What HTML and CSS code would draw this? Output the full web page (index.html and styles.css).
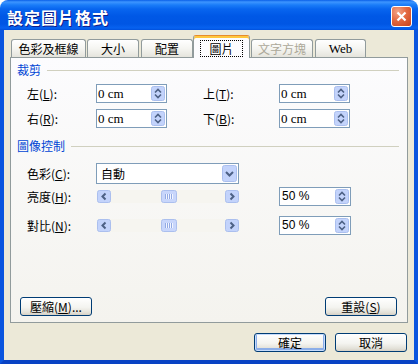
FILE: index.html
```html
<!DOCTYPE html>
<html lang="zh-Hant">
<head>
    <meta charset="UTF-8">
    <title>設定圖片格式</title>
    <link rel="stylesheet" href="styles.css">
</head>
<body>
    <!-- shared control glyphs -->
    <svg class="defs" xmlns="http://www.w3.org/2000/svg">
        <symbol id="spin" viewBox="0 0 14 15">
            <rect x="0.5" y="0.5" width="13" height="14" rx="2" fill="#C3D3FB" stroke="#ABBFEE"/>
            <path d="M4 6.5L7 3.5L10 6.5M4 8.5L7 11.5L10 8.5" fill="none" stroke="#4D6185" stroke-width="1.6"/>
        </symbol>
        <symbol id="drop" viewBox="0 0 15 17">
            <rect x="0.5" y="0.5" width="14" height="16" rx="2" fill="#C3D3FB" stroke="#ABBFEE"/>
            <path d="M4 7L7.5 10.5L11 7" fill="none" stroke="#4D6185" stroke-width="2"/>
        </symbol>
        <symbol id="left" viewBox="0 0 14 13">
            <rect x="0.5" y="0.5" width="13" height="12" rx="2" fill="#C3D3FB" stroke="#ABBFEE"/>
            <path d="M8.5 3.5L5.5 6.5L8.5 9.5" fill="none" stroke="#4D6185" stroke-width="2"/>
        </symbol>
        <symbol id="right" viewBox="0 0 14 13">
            <rect x="0.5" y="0.5" width="13" height="12" rx="2" fill="#C3D3FB" stroke="#ABBFEE"/>
            <path d="M5.5 3.5L8.5 6.5L5.5 9.5" fill="none" stroke="#4D6185" stroke-width="2"/>
        </symbol>
        <symbol id="thumb" viewBox="0 0 16 13">
            <rect x="0.5" y="0.5" width="15" height="12" rx="2" fill="#C8D6FB" stroke="#ABBFEE"/>
            <path d="M5.5 4V9M7.5 4V9M9.5 4V9M11.5 4V9" stroke="#F2F6FF"/>
            <path d="M4.5 4V9M6.5 4V9M8.5 4V9M10.5 4V9" stroke="#93AAE4"/>
        </symbol>
    </svg>

    <div class="window">
        <div class="titlebar">
            <span class="title">設定圖片格式</span>
            <span class="close">
                <svg width="19" height="19" viewBox="0 0 19 19"><path d="M5.5 5.5L13.5 13.5M13.5 5.5L5.5 13.5" stroke="#fff" stroke-width="2.2"/></svg>
            </span>
        </div>

        <div class="frame">
            <div class="tabs">
                <div class="tab t-color">色彩及框線</div>
                <div class="tab t-size">大小</div>
                <div class="tab t-layout">配置</div>
                <div class="tab t-picture active"><span class="focus">圖片</span></div>
                <div class="tab t-textbox disabled">文字方塊</div>
                <div class="tab t-web">Web</div>
            </div>

            <div class="panel">
                <div class="group-title">裁剪</div>
                <div class="crop-grid">
                    <span class="label">左(<u>L</u>):</span>
                    <div class="spin"><span class="val">0 cm</span><svg class="spinbtn"><use href="#spin"/></svg></div>
                    <span class="label right">上(<u>T</u>):</span>
                    <div class="spin"><span class="val">0 cm</span><svg class="spinbtn"><use href="#spin"/></svg></div>

                    <span class="label">右(<u>R</u>):</span>
                    <div class="spin"><span class="val">0 cm</span><svg class="spinbtn"><use href="#spin"/></svg></div>
                    <span class="label right">下(<u>B</u>):</span>
                    <div class="spin"><span class="val">0 cm</span><svg class="spinbtn"><use href="#spin"/></svg></div>
                </div>

                <div class="group-title second">圖像控制</div>
                <div class="crow first">
                    <span class="label">色彩(<u>C</u>):</span>
                    <div class="combo"><span class="val">自動</span><svg class="dropbtn"><use href="#drop"/></svg></div>
                </div>
                <div class="crow">
                    <span class="label">亮度(<u>H</u>):</span>
                    <div class="scroll">
                        <svg class="arrow"><use href="#left"/></svg>
                        <svg class="thumb"><use href="#thumb"/></svg>
                        <span class="track"></span>
                        <svg class="arrow"><use href="#right"/></svg>
                    </div>
                    <span></span>
                    <div class="spin pct"><span class="val">50 %</span><svg class="spinbtn"><use href="#spin"/></svg></div>
                </div>
                <div class="crow last">
                    <span class="label">對比(<u>N</u>):</span>
                    <div class="scroll">
                        <svg class="arrow"><use href="#left"/></svg>
                        <svg class="thumb"><use href="#thumb"/></svg>
                        <span class="track"></span>
                        <svg class="arrow"><use href="#right"/></svg>
                    </div>
                    <span></span>
                    <div class="spin pct"><span class="val">50 %</span><svg class="spinbtn"><use href="#spin"/></svg></div>
                </div>

                <div class="panel-actions">
                    <span class="btn">壓縮(<u>M</u>)...</span>
                    <span class="btn">重設(<u>S</u>)</span>
                </div>
            </div>

            <div class="actions">
                <span class="btn default">確定</span>
                <span class="btn">取消</span>
            </div>
        </div>
    </div>
</body>
</html>
```

FILE: styles.css
```css
body {
    margin: 0;
    background-color: #fff;
    font-family: "Noto Sans CJK TC", sans-serif;
    font-size: 12px;
    color: #000;
}

.defs {
    display: none;
}

.window {
    width: 418px;
    height: 364px;
    display: flex;
    flex-direction: column;
}

/* title bar */
.titlebar {
    height: 30px;
    box-sizing: border-box;
    padding: 3px 6px 0 7px;
    display: flex;
    align-items: center;
    justify-content: space-between;
    border-radius: 8px 8px 0 0;
    background: linear-gradient(#0A5FE8 0, #3D95FF 2px, #1A7CF8 5px, #0865EF 9px, #0058E6 16px, #0056E4 24px, #0762F0 28px, #0050DC 30px);
}

.title {
    color: #fff;
    font-size: 16px;
    font-weight: bold;
    letter-spacing: 1px;
    line-height: 20px;
    text-shadow: 1px 1px #0F1F89;
}

.close {
    width: 21px;
    height: 21px;
    box-sizing: border-box;
    border: 1px solid #fff;
    border-radius: 3px;
    background: radial-gradient(circle at 30% 25%, #F2A488 0, #E46A42 45%, #C8411A 100%);
    display: flex;
}

/* window body */
.frame {
    flex: 1;
    display: flex;
    flex-direction: column;
    background-color: #ECE9D8;
    border: solid #0A55DF;
    border-width: 0 4px 4px 4px;
    border-bottom-color: #0842C4;
    padding: 5px 6px 0 6px;
}

/* tabs */
.tabs {
    height: 22px;
    display: flex;
    align-items: flex-end;
    position: relative;
    z-index: 1;
}

.tab {
    height: 18px;
    box-sizing: border-box;
    border: 1px solid #919B9C;
    border-bottom: none;
    border-radius: 3px 3px 0 0;
    background: linear-gradient(#FFFFFF, #F5F5F1 50%, #E5E4DC);
    display: flex;
    align-items: center;
    justify-content: center;
    line-height: 14px;
}

.t-color { width: 75px; margin-left: 1px; }
.t-size { width: 52px; margin-left: 1px; }
.t-layout { width: 52px; margin-left: 2px; }
.t-picture { width: 57px; }
.t-textbox { width: 62px; margin-left: 1px; }
.t-web { width: 51px; margin-left: 2px; font-family: "Liberation Serif", serif; font-size: 13px; }

.tab.active {
    height: 23px;
    margin-bottom: -1px;
    padding-top: 2px;
    border-top: 1px solid #E68B2C;
    box-shadow: inset 0 2px #FFC73C;
    background: #FCFCFE;
}

.tab.disabled {
    color: #ACA899;
}

.focus {
    outline: 1px dotted #000;
    padding: 1px 8px 0 8px;
}

/* tab page */
.panel {
    height: 266px;
    box-sizing: border-box;
    border: 1px solid #919B9C;
    background: linear-gradient(#FCFCFE, #F4F3EE);
    padding: 5px 8px 6px 6px;
    display: flex;
    flex-direction: column;
}

.group-title {
    height: 14px;
    line-height: 14px;
    display: flex;
    align-items: center;
    color: #0046D5;
}

.group-title::after {
    content: "";
    flex: 1;
    height: 1px;
    margin-left: 6px;
    background-color: #D0D0BF;
}

.group-title.second {
    margin-top: 11px;
}

.label {
    line-height: 14px;
}

.crop-grid {
    display: grid;
    grid-template-columns: 69px 71px 112px 71px;
    grid-auto-rows: 19px;
    row-gap: 6px;
    align-items: center;
    margin: 7px 0 0 10px;
}

.crop-grid .right {
    padding-left: 36px;
}

.spin {
    height: 19px;
    box-sizing: border-box;
    border: 1px solid #7F9DB9;
    background-color: #fff;
    padding: 1px;
    display: flex;
    align-items: center;
}

.spin .val {
    flex: 1;
    font-family: "Liberation Serif", serif;
    font-size: 13px;
    line-height: 15px;
}

.spin.pct {
    width: 72px;
}

.spin.pct .val {
    font-family: "Liberation Sans", sans-serif;
    font-size: 12px;
    padding-left: 1px;
}

.spinbtn {
    width: 14px;
    height: 15px;
    flex: none;
}

.crow {
    display: grid;
    grid-template-columns: 69px 143px 40px 72px;
    height: 19px;
    align-items: center;
    margin: 3px 0 0 10px;
}

.crow.first {
    height: 21px;
    margin-top: 10px;
}

.crow.last {
    margin-top: 10px;
}

.combo {
    height: 21px;
    box-sizing: border-box;
    border: 1px solid #7F9DB9;
    background-color: #fff;
    padding: 1px;
    display: flex;
    align-items: center;
}

.combo .val {
    flex: 1;
    padding-left: 3px;
    line-height: 15px;
}

.dropbtn {
    width: 15px;
    height: 17px;
    flex: none;
}

.scroll {
    height: 13px;
    margin-left: 1px;
    display: flex;
    background-color: #F6F5F0;
}

.scroll .arrow {
    width: 14px;
    height: 13px;
    flex: none;
}

.scroll .thumb {
    width: 16px;
    height: 13px;
    margin-left: 50px;
    flex: none;
}

.scroll .track {
    flex: 1;
}

/* buttons */
.btn {
    width: 72px;
    height: 19px;
    box-sizing: border-box;
    border: 1px solid #003C74;
    border-radius: 3px;
    background: linear-gradient(#FFFFFF, #F4F4F0 55%, #E3E1D8 85%, #D6D0C5);
    display: flex;
    align-items: center;
    justify-content: center;
    line-height: 14px;
}

.btn.default {
    box-shadow: inset 0 0 0 1px #C6DCFC, inset 0 -1px 0 2px #8CAEE8;
}

.panel-actions {
    margin-top: auto;
    display: flex;
    justify-content: space-between;
    padding: 0 2px 0 3px;
}

.actions {
    margin-top: 10px;
    display: flex;
    justify-content: flex-end;
    gap: 9px;
    padding-right: 1px;
}
```
